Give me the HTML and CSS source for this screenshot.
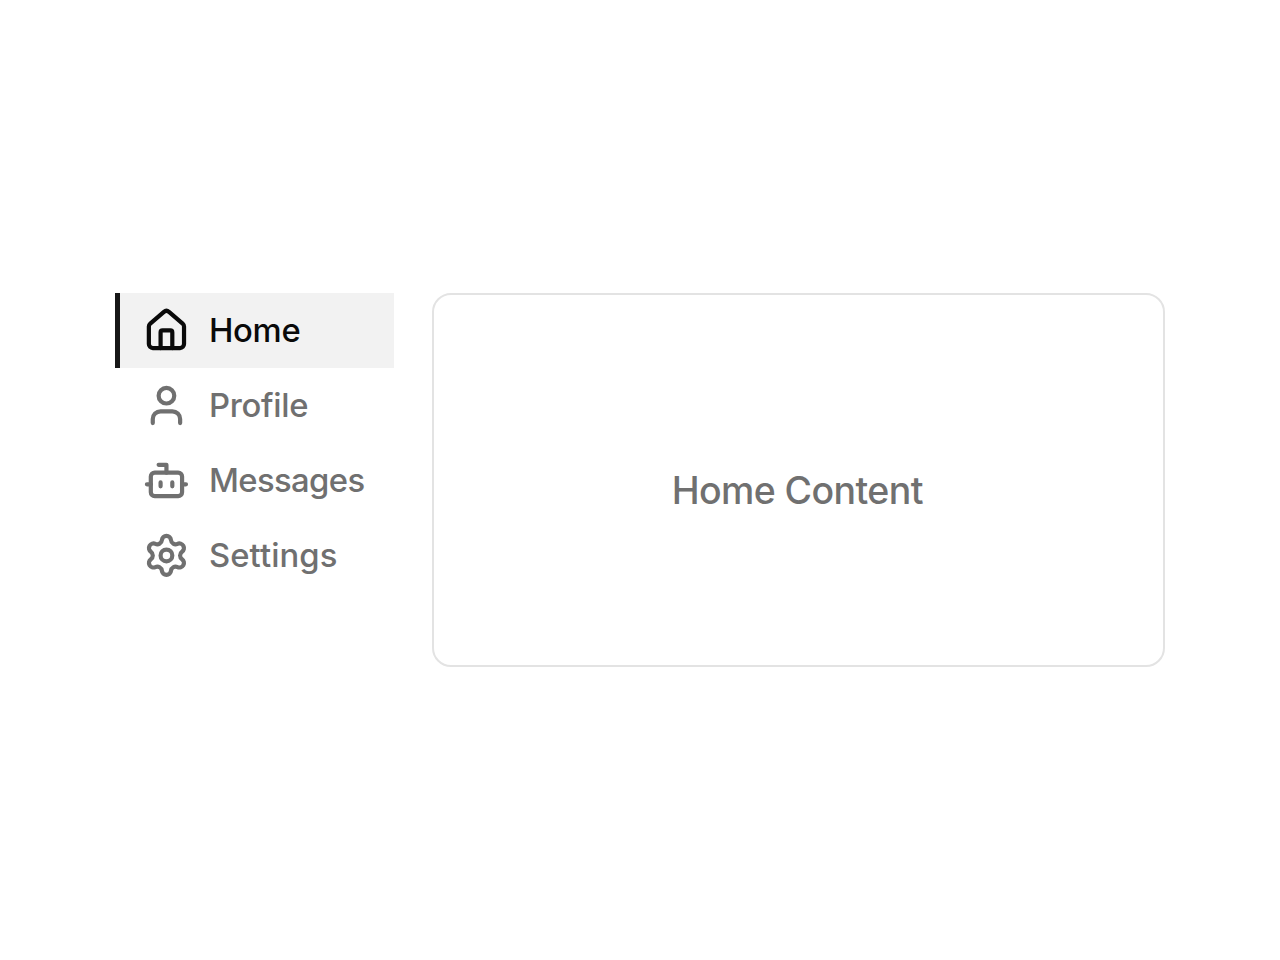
FILE: index.html
```html
<!DOCTYPE html>
<html lang="en">
<head>
<meta charset="UTF-8" />
<title>Vertical Tabs</title>
<link rel="stylesheet" href="styles.css">
</head>
<body>
  <div class="tabs">
    <div class="tab-list" role="tablist">
      <button class="tab active" role="tab" aria-selected="true">
        <svg class="icon" viewBox="0 0 24 24">
          <path d="M15 21v-8a1 1 0 0 0-1-1h-4a1 1 0 0 0-1 1v8" />
          <path d="M3 10a2 2 0 0 1 .709-1.528l7-5.999a2 2 0 0 1 2.582 0l7 5.999A2 2 0 0 1 21 10v9a2 2 0 0 1-2 2H5a2 2 0 0 1-2-2z" />
        </svg>
        <span class="label">Home</span>
      </button>
      <button class="tab" role="tab">
        <svg class="icon" viewBox="0 0 24 24">
          <path d="M19 21v-2a4 4 0 0 0-4-4H9a4 4 0 0 0-4 4v2" />
          <circle cx="12" cy="7" r="4" />
        </svg>
        <span class="label">Profile</span>
      </button>
      <button class="tab" role="tab">
        <svg class="icon" viewBox="0 0 24 24">
          <path d="M12 8V4H8" />
          <rect width="16" height="12" x="4" y="8" rx="2" />
          <path d="M2 14h2M20 14h2M15 13v2M9 13v2" />
        </svg>
        <span class="label label-tight">Messages</span>
      </button>
      <button class="tab" role="tab">
        <svg class="icon" viewBox="0 0 24 24">
          <path d="M9.671 4.136a2.34 2.34 0 0 1 4.659 0 2.34 2.34 0 0 0 3.319 1.915 2.34 2.34 0 0 1 2.33 4.033 2.34 2.34 0 0 0 0 3.831 2.34 2.34 0 0 1-2.33 4.033 2.34 2.34 0 0 0-3.319 1.915 2.34 2.34 0 0 1-4.659 0 2.34 2.34 0 0 0-3.32-1.915 2.34 2.34 0 0 1-2.33-4.033 2.34 2.34 0 0 0 0-3.831A2.34 2.34 0 0 1 6.35 6.051a2.34 2.34 0 0 0 3.319-1.915" />
          <circle cx="12" cy="12" r="3" />
        </svg>
        <span class="label label-wide">Settings</span>
      </button>
    </div>
    <div class="panel" role="tabpanel">
      <p class="panel-text">Home Content</p>
    </div>
  </div>
</body>
</html>
```
FILE: styles.css
```css
body {
  margin: 0;
  min-height: 100vh;
  display: flex;
  align-items: center;
  justify-content: center;
  background: #fff;
  font-family: Inter, sans-serif;
  font-weight: 500;
  color: #707070;
}

.tabs {
  display: flex;
  gap: 37.5px;
  width: 1050px;
  height: 374px;
}

.tab-list {
  display: flex;
  flex-direction: column;
  width: 279px;
}

.tab {
  display: flex;
  align-items: center;
  gap: 19px;
  height: 75px;
  padding: 0 0 1px 23px;
  border: 0;
  border-left: 5px solid transparent;
  background: none;
  color: inherit;
  font: inherit;
  font-size: 32.8px;
  line-height: 48px;
}

.tab.active {
  border-left-color: #171717;
  background: #f2f2f2;
  color: #0a0a0a;
}

.icon {
  width: 46.9px;
  height: 46.9px;
  fill: none;
  stroke: currentColor;
  stroke-width: 2.15;
  stroke-linecap: round;
  stroke-linejoin: round;
}

.label {
  padding-bottom: 1px;
  letter-spacing: -0.25px;
}

.label-tight {
  letter-spacing: -0.6px;
}

.label-wide {
  letter-spacing: 0.1px;
}

.panel {
  flex: 1;
  display: flex;
  align-items: center;
  justify-content: center;
  box-sizing: border-box;
  padding: 20px 2px 0 0;
  border: 2px solid #e3e3e3;
  border-radius: 19px;
}

.panel-text {
  margin: 0;
  font-size: 37.5px;
  letter-spacing: -0.6px;
}
```
